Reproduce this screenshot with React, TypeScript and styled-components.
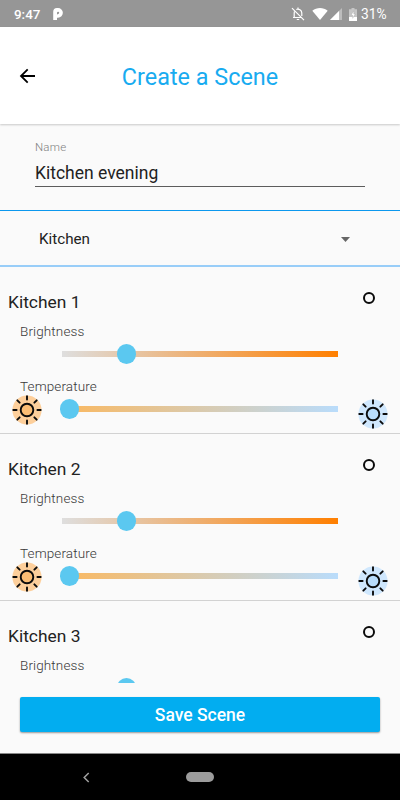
import React from "react";
import styled, { createGlobalStyle } from "styled-components";

const GlobalStyle = createGlobalStyle`
  * { box-sizing: border-box; }
  body { margin: 0; background: #fafafa; font-family: Roboto, "Liberation Sans", sans-serif; }
`;

const Screen = styled.div`
  width: 400px;
  height: 800px;
  display: flex;
  flex-direction: column;
  overflow: hidden;
  background: #fafafa;
  color: #111;
`;

const StatusBar = styled.div`
  height: 27px;
  flex: none;
  display: flex;
  align-items: center;
  padding: 1px 14px 0 14px;
  background: #969696;
  color: #fff;
  font-size: 13.4px;
  font-weight: 500;
`;

const StatusIcons = styled.div`
  margin-left: auto;
  display: flex;
  align-items: center;
`;

const StatusIcon = styled.svg<{ $gap: number }>`
  display: block;
  flex: none;
  margin-right: ${(p) => p.$gap}px;
`;

const Clock = styled.span`
  width: 39px;
`;

const Percent = styled.span`
  width: 25px;
  font-size: 13.8px;
  font-weight: 400;
  white-space: nowrap;
`;

const Header = styled.header`
  height: 97px;
  flex: none;
  display: grid;
  grid-template-columns: 60px 1fr 60px;
  align-items: center;
  background: #fff;
  box-shadow: 0 1px 2px rgba(0, 0, 0, 0.2);
`;

const BackButton = styled.button`
  border: 0;
  padding: 0 0 0 19px;
  background: none;
  display: flex;
`;

const Title = styled.h1`
  margin: 3px 0 0;
  text-align: center;
  font-size: 23.4px;
  font-weight: 400;
  line-height: 30px;
  color: #18abf0;
`;

const NameField = styled.label`
  height: 86px;
  flex: none;
  padding: 14px 35px 0;
  display: flex;
  flex-direction: column;
`;

const FieldLabel = styled.span`
  font-size: 11.5px;
  font-weight: 300;
  line-height: 18px;
  letter-spacing: 0.2px;
  color: #808080;
`;

const FieldInput = styled.input`
  height: 31px;
  border: 0;
  border-bottom: 1px solid #5c5c5c;
  border-radius: 0;
  padding: 4px 0 0;
  outline: none;
  background: none;
  font: 400 17.5px Roboto, sans-serif;
  color: #222;
`;

const RoomPicker = styled.button`
  height: 57px;
  flex: none;
  display: flex;
  align-items: center;
  justify-content: space-between;
  border: 0;
  border-top: 1px solid #0c98ee;
  border-bottom: 2px solid #98cdf8;
  padding: 2px 50px 0 39px;
  background: none;
  font: 400 15.2px Roboto, sans-serif;
  color: #222;
`;

const LightList = styled.main`
  height: 416px;
  flex: none;
  overflow: hidden;
`;

const LightCard = styled.section`
  height: 167px;
  border-bottom: 1px solid #d2d2d2;
`;

const CardHead = styled.div`
  height: 54px;
  padding: 24px 25px 0 8px;
  display: flex;
  justify-content: space-between;
  align-items: flex-start;
`;

const LightName = styled.h2`
  margin: 0;
  font-size: 17.4px;
  line-height: 23px;
  font-weight: 400;
  color: #222;
`;

const Radio = styled.span`
  width: 12px;
  height: 12px;
  margin-top: 1px;
  border: 2px solid #0a0a0a;
  border-radius: 50%;
`;

const SliderLabel = styled.div<{ $gap?: number }>`
  height: 20px;
  margin-top: ${(p) => p.$gap ?? 0}px;
  padding-left: 20px;
  font-size: 13.5px;
  font-weight: 300;
  line-height: 20px;
  letter-spacing: 0.12px;
  color: #383838;
`;

const SliderRow = styled.div`
  height: 26px;
  display: grid;
  grid-template-columns: 62px 276px 62px;
  grid-template-rows: 26px;
  align-items: center;
`;

const Track = styled.div<{ $from: string; $to: string }>`
  grid-column: 2;
  height: 6px;
  display: flex;
  align-items: center;
  background: linear-gradient(90deg, ${(p) => p.$from}, ${(p) => p.$to});
`;

const Thumb = styled.span<{ $at: number }>`
  width: 19.4px;
  height: 19.4px;
  flex: none;
  margin-left: ${(p) => p.$at - 9.7}px;
  border-radius: 50%;
  background: #5bc8f0;
`;

const SunBadge = styled.svg<{ $cool?: boolean }>`
  display: block;
  grid-row: 1;
  grid-column: ${(p) => (p.$cool ? 3 : 1)};
  width: 30px;
  height: 30px;
  margin: ${(p) => (p.$cool ? "9px 0 0 19.7px" : "1px 0 0 12.2px")};
`;

const Footer = styled.footer`
  height: 70px;
  flex: none;
  padding: 14px 20px 0;
`;

const SaveButton = styled.button`
  display: block;
  width: 100%;
  height: 35px;
  border: 0;
  border-radius: 2px;
  padding: 1px 0 0;
  background: #02adf0;
  color: #fff;
  font: 500 17.5px Roboto, sans-serif;
  box-shadow: 0 1px 2px rgba(0, 0, 0, 0.4);
`;

const NavBar = styled.nav`
  flex: 1;
  display: grid;
  grid-template-columns: 1fr 28px 1fr;
  align-items: center;
  border-top: 1px solid #888;
  background: #000;
`;

const NavBack = styled.svg`
  display: block;
  margin-left: 82px;
`;

const HomePill = styled.span`
  height: 10px;
  border-radius: 5px;
  background: #9c9c9c;
`;

function Sun({ cool }: { cool?: boolean }) {
  return (
    <SunBadge $cool={cool} viewBox="-15 -15 30 30">
      <circle r="14.6" fill={cool ? "#cfe7fd" : "#fdcf9b"} />
      <circle r="6.3" fill={cool ? "#b8dcfb" : "#fbbd74"} stroke="#0b0b0b" strokeWidth="1.9" />
      {[0, 45, 90, 135, 180, 225, 270, 315].map((a) => (
        <path key={a} d="M0-10.4V-13.7" transform={`rotate(${a})`} stroke="#0b0b0b" strokeWidth="1.9" strokeLinecap="round" />
      ))}
    </SunBadge>
  );
}

function Light({ name }: { name: string }) {
  return (
    <LightCard>
      <CardHead>
        <LightName>{name}</LightName>
        <Radio />
      </CardHead>
      <SliderLabel>Brightness</SliderLabel>
      <SliderRow>
        <Track $from="#dedede" $to="#ff7f00">
          <Thumb $at={64.3} />
        </Track>
      </SliderRow>
      <SliderLabel $gap={9}>Temperature</SliderLabel>
      <SliderRow>
        <Sun />
        <Track $from="#fbb85f" $to="#b9dcfb">
          <Thumb $at={7.3} />
        </Track>
        <Sun cool />
      </SliderRow>
    </LightCard>
  );
}

export default function App() {
  return (
    <>
      <GlobalStyle />
      <Screen>
        <StatusBar>
          <Clock>9:47</Clock>
          <StatusIcon $gap={0} width="10" height="12" viewBox="0 0 10 12">
            <path d="M.2 12V4Q.2 0 4 0H5A4.800 4.800 0 0 1 5 9.700H4V12z" fill="#fff" />
            <path d="M4 6.600V4.800a1.100 1.100 0 1 1 1.200 1.200z" fill="#969696" />
          </StatusIcon>
          <StatusIcons>
            <StatusIcon $gap={7} width="14" height="14" viewBox="0 0 14 14" fill="none" stroke="#fff" strokeWidth="1.2">
              <path d="M1 1.2L13 13.2M2 10.5H10.2M3.2 10.3V6c0-1 .3-1.800.8-2.500M5.300 2.500C7.800 1.400 10.800 3.200 10.800 6V9M7 .5V2.200M5.800 12.500h2.400" />
            </StatusIcon>
            <StatusIcon $gap={2} width="16" height="12" viewBox="0 0 16 12">
              <path d="M.3 2.800C4.800-.8 11.200-.8 15.700 2.800L8 12z" fill="#fff" />
            </StatusIcon>
            <StatusIcon $gap={7} width="12" height="12" viewBox="0 0 12 12">
              <path d="M12 0V12H0z" fill="#bdbdbd" />
              <path d="M9 3V12H0z" fill="#fff" />
            </StatusIcon>
            <StatusIcon $gap={4} width="8" height="13" viewBox="0 0 8 13">
              <path d="M2.500 0h3v1.300H8V13H0V1.300h2.500z" fill="#c6c6c6" />
              <path d="M0 9H8V13H0z" fill="#fff" />
              <path d="M4.800 2.800L2 7.300h1.700v3L6.200 6H4.800z" fill="#fff" stroke="#969696" strokeWidth=".3" />
            </StatusIcon>
            <Percent>31%</Percent>
          </StatusIcons>
        </StatusBar>
        <Header>
          <BackButton aria-label="Back">
            <svg width="17" height="16" viewBox="0 0 17 16" fill="none" stroke="#000" strokeWidth="1.8">
              <path d="M16 8H2.300M8.700 1.300L2 8L8.700 14.700" />
            </svg>
          </BackButton>
          <Title>Create a Scene</Title>
        </Header>
        <NameField>
          <FieldLabel>Name</FieldLabel>
          <FieldInput defaultValue="Kitchen evening" />
        </NameField>
        <RoomPicker>
          Kitchen
          <svg width="9" height="5" viewBox="0 0 9 5">
            <path d="M0 0H9L4.500 5z" fill="#666" />
          </svg>
        </RoomPicker>
        <LightList>
          <Light name="Kitchen 1" />
          <Light name="Kitchen 2" />
          <Light name="Kitchen 3" />
        </LightList>
        <Footer>
          <SaveButton>Save Scene</SaveButton>
        </Footer>
        <NavBar>
          <NavBack width="9" height="11" viewBox="0 0 9 11" fill="none" stroke="#a0a0a0" strokeWidth="1.500">
            <path d="M6.700 1L2.200 5.500L6.700 10" />
          </NavBack>
          <HomePill />
        </NavBar>
      </Screen>
    </>
  );
}
